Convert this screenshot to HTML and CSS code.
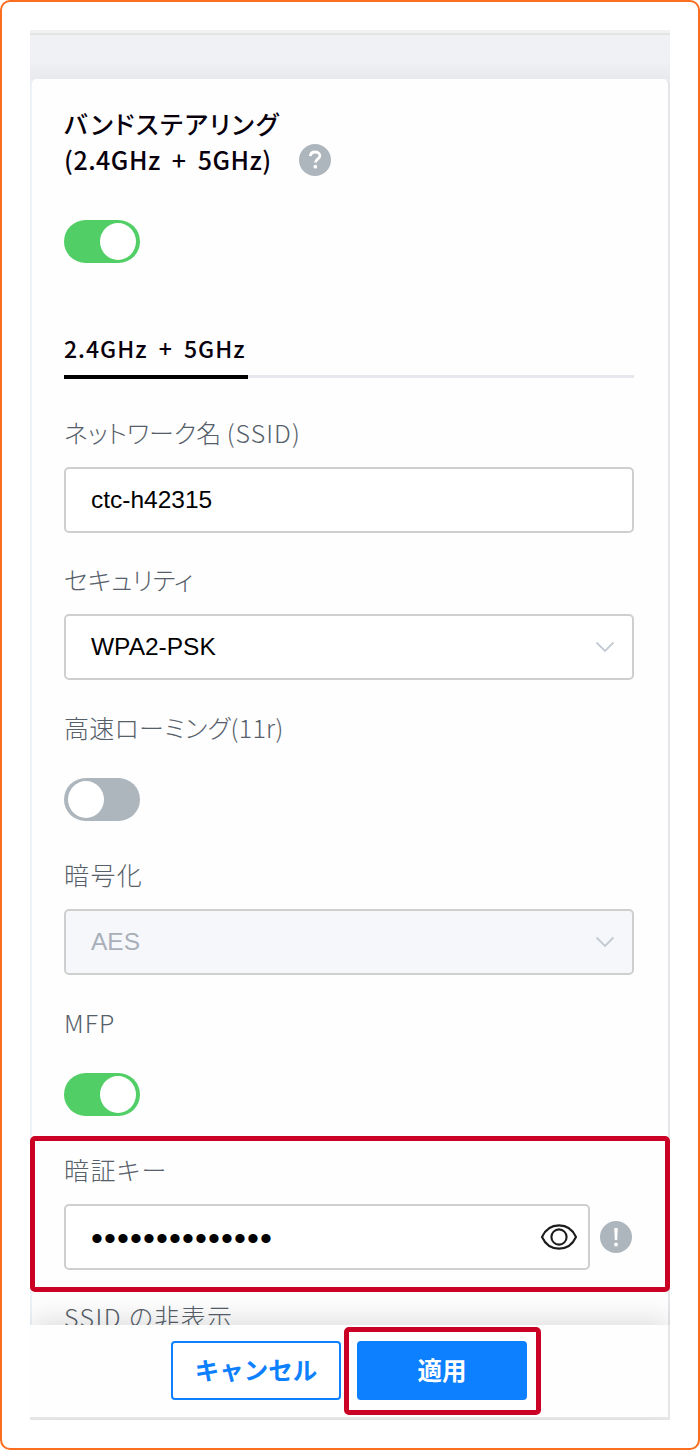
FILE: index.html
```html
<!DOCTYPE html>
<html lang="ja">
  <head>
    <meta charset="utf-8" />
    <meta name="viewport" content="width=device-width, initial-scale=1.0" />
    <title>Wi-Fi</title>
    <link rel="stylesheet" href="styles.css">
  </head>
  <body>
    <div class="frame">
      <div class="panel">
        <div class="topbar"></div>
        <div class="card">
          <div class="heading">
            <h1 class="title">
              <span class="title-kana">バンドステアリング</span><br />
              <span class="title-band">(2.4GHz + 5GHz)</span>
            </h1>
            <svg class="help" width="32" height="32" viewBox="0 0 32 32">
              <circle cx="16" cy="16" r="16" fill="#adb5bd" />
              <path d="M11.3 12.2c.3-2.8 2.2-4.2 4.8-4.2 2.8 0 4.8 1.5 4.8 3.8 0 3.3-4.5 3.2-4.5 6.8" fill="none" stroke="#fff" stroke-width="2.8" />
              <circle cx="16.3" cy="22.7" r="1.9" fill="#fff" />
            </svg>
          </div>
          <div class="toggle toggle-on"><div class="knob"></div></div>
          <div class="tabs">
            <div class="tab">2.4GHz + 5GHz</div>
          </div>

          <div class="field">
            <div class="label">ネットワーク名 <span class="label-latin">(SSID)</span></div>
            <div class="input">ctc-h42315</div>
          </div>
          <div class="field">
            <div class="label">セキュリティ</div>
            <div class="input">
              WPA2-PSK
              <svg class="arrow" width="20" height="12" viewBox="0 0 20 12">
                <path d="M1.5 1.5L10 10L18.5 1.5" fill="none" stroke="#c3cad3" stroke-width="1.8" />
              </svg>
            </div>
          </div>
          <div class="field">
            <div class="label label-roaming">高速ローミング(11r)</div>
            <div class="toggle toggle-off"><div class="knob"></div></div>
          </div>
          <div class="field">
            <div class="label label-wide">暗号化</div>
            <div class="input input-disabled">
              AES
              <svg class="arrow" width="20" height="12" viewBox="0 0 20 12">
                <path d="M1.5 1.5L10 10L18.5 1.5" fill="none" stroke="#c3cad3" stroke-width="1.8" />
              </svg>
            </div>
          </div>
          <div class="field">
            <div class="label label-latin">MFP</div>
            <div class="toggle toggle-on"><div class="knob"></div></div>
          </div>
          <div class="field">
            <div class="label label-wide">暗証キー</div>
            <div class="input-row">
              <div class="input">
                <span class="dots">••••••••••••••</span>
                <svg class="eye" width="38" height="28" viewBox="0 0 38 28">
                  <path d="M2 14C5.5 6.3 11.5 2.4 19 2.4S32.5 6.3 36 14C32.5 21.7 26.5 25.6 19 25.6S5.5 21.7 2 14Z" fill="none" stroke="#1c1c1c" stroke-width="2.1" />
                  <circle cx="19" cy="14" r="7.6" fill="none" stroke="#1c1c1c" stroke-width="2.1" />
                </svg>
              </div>
              <svg class="warn" width="32" height="32" viewBox="0 0 32 32">
                <circle cx="16" cy="16" r="16" fill="#adb5bd" />
                <path d="M14.3 7h3.4l-.5 12h-2.4z" fill="#fff" />
                <circle cx="16" cy="23.5" r="1.9" fill="#fff" />
              </svg>
            </div>
          </div>
          <div class="field">
            <div class="label label-wide">SSID の非表示</div>
          </div>
        </div>
        <div class="footer">
          <button type="button" class="button button-cancel">キャンセル</button>
          <button type="button" class="button button-apply">適用</button>
        </div>
        <div class="mark mark-key"></div>
        <div class="mark mark-apply"></div>
      </div>
    </div>
  </body>
</html>
```

FILE: styles.css
```css
body {
  margin: 0;
  background-color: #fff;
  font-family: "Noto Sans CJK JP", sans-serif;
}
.frame {
  box-sizing: border-box;
  width: 700px;
  height: 1450px;
  padding: 28px;
  border: 2px solid #fb6d1f;
  border-radius: 10px;
}
.panel {
  position: relative;
  width: 640px;
  height: 1390px;
  overflow: hidden;
  background-color: #ecedf0;
}
.topbar {
  box-sizing: border-box;
  height: 49px;
  border-top: 3px solid #f1f1f1;
  background: linear-gradient(#e4e4e4 2px, #f0f1f5 2px, #f0f1f4 28px, #e8e9ec);
}
.card {
  box-sizing: border-box;
  height: 1246px;
  padding: 26px 34px 0 32px;
  border-left: 2px solid #edf2f8;
  border-right: 2px solid #e3e5e8;
  border-radius: 6px 6px 0 0;
  background-color: #fefefe;
  overflow: hidden;
}
.heading {
  display: flex;
  align-items: flex-end;
  height: 72px;
}
.title {
  width: 235px;
  margin: 0;
  font-size: 25px;
  font-weight: 500;
  line-height: 36px;
  color: #08000c;
  white-space: nowrap;
}
.title-kana {
  font-feature-settings: "palt";
  letter-spacing: 1.7px;
}
.title-band {
  letter-spacing: 0.5px;
  word-spacing: 5px;
}
.help {
  margin-bottom: 1px;
}

/* switches */
.toggle {
  box-sizing: border-box;
  display: flex;
  width: 76px;
  height: 43px;
  padding: 3px 4px;
  border-radius: 22px;
}
.toggle-on {
  justify-content: flex-end;
  background-color: #51cf66;
}
.toggle-off {
  background-color: #adb5bd;
}
.knob {
  width: 36px;
  height: 37px;
  border-radius: 50%;
  background-color: #fff;
}
.heading + .toggle {
  margin-top: 43px;
}

.tabs {
  display: flex;
  height: 46px;
  margin: 69px 0 36px;
  box-shadow: inset 0 -3px #e6e8ed;
}
.tab {
  box-sizing: border-box;
  width: 184px;
  height: 47px;
  border-bottom: 4px solid #000;
  font-size: 23px;
  font-weight: 500;
  line-height: 33px;
  letter-spacing: 1px;
  word-spacing: 5px;
  color: #08000c;
  white-space: nowrap;
}

/* form rows */
.field {
  height: 147.4px;
}
.label {
  height: 36px;
  margin-bottom: 17px;
  font-size: 25px;
  font-weight: 300;
  line-height: 36px;
  color: #56606a;
  white-space: nowrap;
  font-feature-settings: "palt";
}
.label-roaming {
  letter-spacing: 0.3px;
}
.label-latin {
  letter-spacing: 1px;
}
.label-wide {
  letter-spacing: 1.4px;
}
.label + .toggle {
  margin-top: 33px;
}
.input {
  box-sizing: border-box;
  display: flex;
  flex: 1;
  align-items: center;
  justify-content: space-between;
  height: 66px;
  padding: 0 17px 0 25px;
  border: 2px solid #cfcfcf;
  border-radius: 5px;
  background-color: #fff;
  font-family: "Liberation Sans", sans-serif;
  font-size: 24.5px;
  color: #000;
}
.input-disabled {
  background-color: #f5f7fa;
  color: #a9afb8;
}
.input-row {
  display: flex;
  align-items: center;
  gap: 10px;
  margin-right: 2px;
}
.input-row .input {
  padding-right: 10px;
}
.dots {
  padding-top: 4px;
  font-size: 34px;
  letter-spacing: 1.1px;
}

.footer {
  position: relative;
  box-sizing: border-box;
  display: flex;
  gap: 16px;
  height: 94px;
  padding: 16px 0 0 141px;
  border-right: 2px solid #e6e6e6;
  border-bottom: 2px solid #e6e6e6;
  background-color: #fefefe;
  box-shadow: 0 -4px 28px rgba(0, 0, 0, 0.14);
}
.button {
  box-sizing: border-box;
  width: 170px;
  height: 59px;
  padding: 0 0 3px;
  border: 2px solid #0d80ff;
  border-radius: 4px;
  font-family: "Noto Sans CJK JP", sans-serif;
  font-size: 24.5px;
  font-weight: 700;
}
.button-cancel {
  background-color: #fff;
  color: #0d80ff;
}
.button-apply {
  background-color: #0d80ff;
  color: #fff;
}

/* red highlight boxes */
.mark {
  position: absolute;
  box-sizing: border-box;
  border: 5px solid #ca0024;
  border-radius: 5px;
}
.mark-key {
  top: 1106px;
  left: 0;
  width: 640px;
  height: 156px;
}
.mark-apply {
  top: 1297px;
  left: 314px;
  width: 197px;
  height: 88px;
}
```
